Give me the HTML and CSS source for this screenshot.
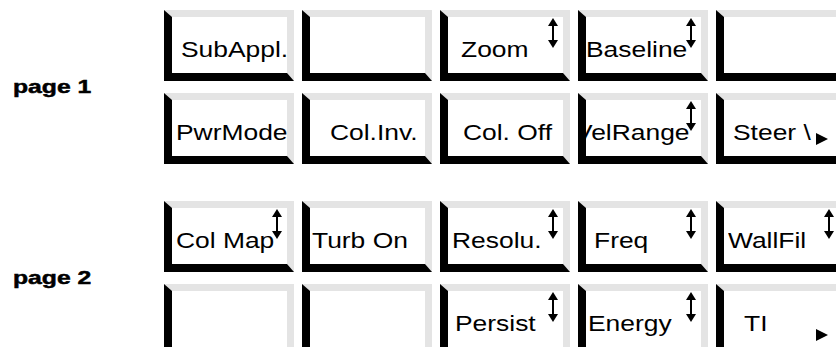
FILE: index.html
```html
<!doctype html>
<html>
    <head>
        <title>Softkey pages</title>
        <meta charset="utf-8">
        <link rel="stylesheet" href="styles.css">
    </head>
    <body>
        <div class="panel">
            <section class="page">
                <div class="page-name"><span>page 1</span></div>
                <div class="keys">
                    <div class="key in-9"><span>SubAppl.</span></div>
                    <div class="key"></div>
                    <div class="key in-13"><span>Zoom</span>
                        <svg class="updown" viewBox="0 0 10 30"><path d="M5 0L10 8H6V22H10L5 30L0 22H4V8H0Z"/></svg>
                    </div>
                    <div class="key in-0"><span>Baseline</span>
                        <svg class="updown" viewBox="0 0 10 30"><path d="M5 0L10 8H6V22H10L5 30L0 22H4V8H0Z"/></svg>
                    </div>
                    <div class="key"></div>

                    <div class="key in-4"><span>PwrMode</span></div>
                    <div class="key in-20"><span>Col.Inv.</span></div>
                    <div class="key in-15"><span>Col. Off</span></div>
                    <div class="key in-under"><span>VelRange</span>
                        <svg class="updown" viewBox="0 0 10 30"><path d="M5 0L10 8H6V22H10L5 30L0 22H4V8H0Z"/></svg>
                    </div>
                    <div class="key in-9"><span>Steer \</span><i class="more"></i></div>
                </div>
            </section>

            <section class="page">
                <div class="page-name"><span>page 2</span></div>
                <div class="keys">
                    <div class="key in-4"><span>Col Map</span>
                        <svg class="updown" viewBox="0 0 10 30"><path d="M5 0L10 8H6V22H10L5 30L0 22H4V8H0Z"/></svg>
                    </div>
                    <div class="key in-2"><span>Turb On</span></div>
                    <div class="key in-4"><span>Resolu.</span>
                        <svg class="updown" viewBox="0 0 10 30"><path d="M5 0L10 8H6V22H10L5 30L0 22H4V8H0Z"/></svg>
                    </div>
                    <div class="key in-8"><span>Freq</span>
                        <svg class="updown" viewBox="0 0 10 30"><path d="M5 0L10 8H6V22H10L5 30L0 22H4V8H0Z"/></svg>
                    </div>
                    <div class="key in-4"><span>WallFil</span>
                        <svg class="updown" viewBox="0 0 10 30"><path d="M5 0L10 8H6V22H10L5 30L0 22H4V8H0Z"/></svg>
                    </div>

                    <div class="key"></div>
                    <div class="key"></div>
                    <div class="key in-7"><span>Persist</span>
                        <svg class="updown" viewBox="0 0 10 30"><path d="M5 0L10 8H6V22H10L5 30L0 22H4V8H0Z"/></svg>
                    </div>
                    <div class="key in-2"><span>Energy</span>
                        <svg class="updown" viewBox="0 0 10 30"><path d="M5 0L10 8H6V22H10L5 30L0 22H4V8H0Z"/></svg>
                    </div>
                    <div class="key in-20"><span>TI</span><i class="more low"></i></div>
                </div>
            </section>
        </div>
    </body>
</html>
```

FILE: styles.css
```css
html, body {
    overflow: hidden;
}

body {
    margin: 0;
    background: white;
    color: black;
    font: 22px/22px 'Liberation Sans', Arial, sans-serif;
}

.panel {
    padding-top: 10px;
}

.page {
    display: flex;
}

.page + .page {
    margin-top: 37px;
}

.page-name {
    box-sizing: border-box;
    width: 164px;
    flex: none;
    padding-left: 13px;
    display: flex;
    align-items: center;
    font-weight: bold;
    font-size: 19px;
}

.page-name span {
    display: inline-block;
    transform: scaleX(1.3);
    transform-origin: 0 50%;
    -webkit-text-stroke: 0.5px black;
    white-space: nowrap;
}

.keys {
    display: grid;
    grid-template-columns: repeat(5, 130px);
    grid-auto-rows: 71px;
    gap: 12px 8px;
}

.key {
    position: relative;
    box-sizing: border-box;
    overflow: hidden;
    background: white;
    border-style: solid;
    border-width: 7px 7px 8px 8px;
    border-color: #e4e4e4 #e4e4e4 black black;
    padding-top: 22px;
    white-space: nowrap;
}

.key span {
    display: inline-block;
    transform: scaleX(1.2);
    transform-origin: 0 0;
}

.in-0 { padding-left: 0; }
.in-2 { padding-left: 2px; }
.in-4 { padding-left: 4px; }
.in-7 { padding-left: 7px; }
.in-8 { padding-left: 8px; }
.in-9 { padding-left: 9px; }
.in-13 { padding-left: 13px; }
.in-15 { padding-left: 15px; }
.in-20 { padding-left: 20px; }

/* label runs in under the left edge of the key */
.in-under span {
    margin-left: -11px;
}

.updown {
    position: absolute;
    top: 1px;
    left: 100px;
    width: 10px;
    height: 30px;
    fill: black;
}

.more {
    position: absolute;
    top: 33px;
    left: 92px;
    width: 0;
    height: 0;
    border-left: 12px solid black;
    border-top: 6px solid transparent;
    border-bottom: 6px solid transparent;
}

.more.low {
    top: 38px;
}
```
